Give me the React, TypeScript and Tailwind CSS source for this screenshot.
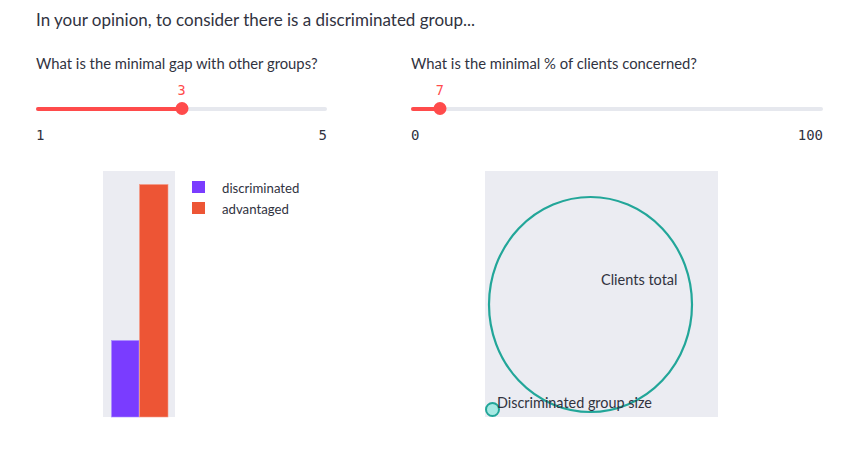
import React from "react";

const SANS = { fontFamily: '"Source Sans Pro", Lato, "Noto Sans", sans-serif' };
const MONO = { fontFamily: '"DejaVu Sans Mono", "Liberation Mono", monospace' };

function Slider({ label, min, max, value }: { label: string; min: number; max: number; value: number }) {
  const pct = ((value - min) / (max - min)) * 100;
  return (
    <div className="flex flex-col">
      <div className="h-[20px] leading-[20px] text-[14.8px] text-[#31333f] whitespace-nowrap">{label}</div>
      <div className="relative h-[17px] mt-[9.3px]">
        <span
          className="absolute top-0 text-[13.5px] leading-[17px] text-[#ff4b4b] -translate-x-1/2"
          style={{ ...MONO, left: `${pct}%` }}
        >
          {value}
        </span>
      </div>
      <div className="relative h-[14px] mt-[2.5px] flex items-center">
        <div className="w-full h-[4px] rounded-full bg-[#e6e8ee]" />
        <div className="absolute left-0 h-[4px] rounded-full bg-[#ff4b4b]" style={{ width: `${pct}%` }} />
        <div
          className="absolute w-[13px] h-[13px] rounded-full bg-[#ff4b4b] -translate-x-1/2"
          style={{ left: `${pct}%` }}
        />
      </div>
      <div className="flex justify-between h-[18px] mt-[10px] text-[14px] leading-[18px] text-[#31333f]" style={MONO}>
        <span>{min}</span>
        <span>{max}</span>
      </div>
    </div>
  );
}

function BarChart() {
  return (
    <svg width={291} height={270} className="block mt-[16px]" style={SANS}>
      <rect x={67} y={11} width={72} height={246} fill="#ebecf2" />
      <rect x={75.5} y={180.5} width={27.5} height={76.5} fill="#7a3cff" stroke="#a98bff" strokeWidth={0.6} />
      <rect x={103.5} y={24.5} width={28.5} height={232.5} fill="#ed5535" stroke="#f59a85" strokeWidth={0.6} />
      <rect x={156} y={21} width={13} height={12} fill="#7a3cff" />
      <rect x={156} y={42} width={13} height={12} fill="#ed5535" />
      <text x={186} y={28} dominantBaseline="central" fontSize={13.2} fill="#31333f">
        discriminated
      </text>
      <text x={186} y={49} dominantBaseline="central" fontSize={13.2} fill="#31333f">
        advantaged
      </text>
    </svg>
  );
}

function CircleChart() {
  return (
    <svg width={412} height={270} className="block mt-[16px]" style={SANS}>
      <rect x={74} y={11} width={233} height={246} fill="#ebecf2" />
      <ellipse cx={179.5} cy={144.5} rx={101.5} ry={107.5} fill="none" stroke="#22a699" strokeWidth={2.2} />
      <text x={190} y={119} dominantBaseline="central" fontSize={14.5} fill="#31333f">
        Clients total
      </text>
      <circle cx={81.5} cy={249.5} r={6.5} fill="#a6e9e3" stroke="#22a699" strokeWidth={2} />
      <text x={86} y={242} dominantBaseline="central" fontSize={14.4} fill="#31333f">
        Discriminated group size
      </text>
    </svg>
  );
}

export default function App() {
  return (
    <div className="w-[847px] h-[449px] bg-white overflow-hidden pl-[36px] pt-[7.5px]" style={SANS}>
      <div className="h-[24px] leading-[24px] text-[17px] text-[#31333f] whitespace-nowrap">
        In your opinion, to consider there is a discriminated group...
      </div>
      <div className="flex gap-[84px] mt-[21.7px]">
        <div className="w-[291px] flex flex-col">
          <Slider label="What is the minimal gap with other groups?" min={1} max={5} value={3} />
          <BarChart />
        </div>
        <div className="w-[412px] flex flex-col">
          <Slider label="What is the minimal % of clients concerned?" min={0} max={100} value={7} />
          <CircleChart />
        </div>
      </div>
    </div>
  );
}
